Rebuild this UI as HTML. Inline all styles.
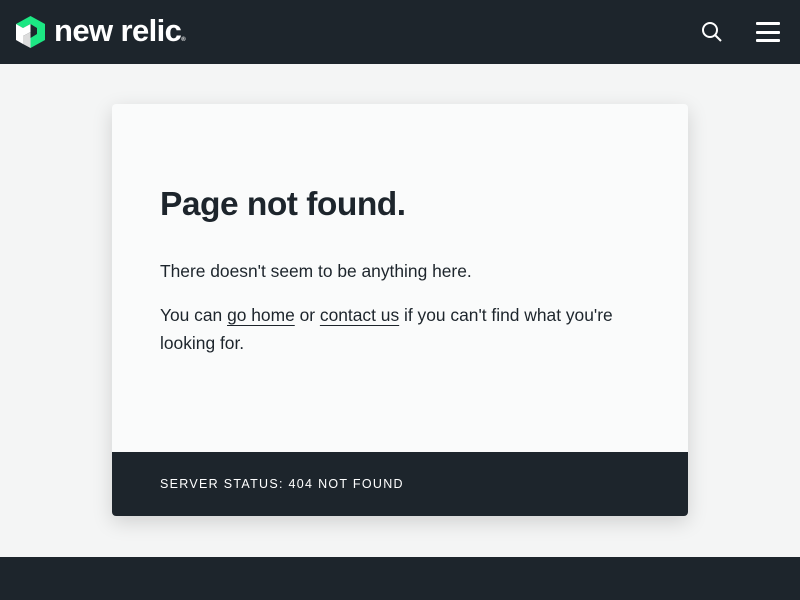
<!DOCTYPE html>
<html><head><meta charset="utf-8"><style>
html,body{margin:0;padding:0;width:800px;height:600px;overflow:hidden;background:#f4f5f5;font-family:"Liberation Sans",sans-serif}
.top{position:absolute;left:0;top:0;width:800px;height:64px;background:#1d252c}
.logo-t{position:absolute;left:54px;top:13px;color:#fff;font-weight:bold;font-size:31px;letter-spacing:-0.6px}
.card{position:absolute;left:112px;top:104px;width:576px;height:412px;background:#fafbfb;border-radius:4px;box-shadow:0 6px 20px rgba(0,0,0,.15);overflow:hidden}
h1{position:absolute;left:48px;top:82px;margin:0;font-size:33.5px;font-weight:bold;color:#1d252c;letter-spacing:-0.5px}
p{position:absolute;left:48px;margin:0;font-size:17.4px;color:#1d252c;line-height:28px;width:490px}
a{color:#1d252c;text-decoration:underline;text-underline-offset:4px}
.foot{position:absolute;left:0;bottom:0;width:576px;height:64px;background:#1d252c;color:#fff;font-size:12.5px;letter-spacing:1.3px}
.bot{position:absolute;left:0;top:557px;width:800px;height:43px;background:#1d252c}
</style></head><body>
<div class="top">
<svg style="position:absolute;left:16px;top:16px" width="29" height="32" viewBox="0 0 29 32">
<polygon points="14.5,0 29,8 29,24 14.5,32 14.5,22 21,18 21,12 14.5,8 7,12 0,8" fill="#1ce783"/>
<polygon points="0,8 7,12 14.5,8 14.5,16 7,20 7,28 0,24" fill="#fff"/>
<polygon points="7,20 14.5,16 14.5,32 7,28" fill="#dcdcdc"/>
</svg>
<div class="logo-t">new relic<span style="font-size:6px">®</span></div>
<svg style="position:absolute;left:701px;top:21px" width="22" height="22" viewBox="0 0 22 22" fill="none" stroke="#fff" stroke-width="2"><circle cx="9" cy="9" r="7"/><line x1="14" y1="14" x2="20" y2="20"/></svg>
<svg style="position:absolute;left:756px;top:21px" width="24" height="22" viewBox="0 0 24 22" fill="#fff"><rect x="0" y="1" width="24" height="3" rx="1"/><rect x="0" y="10" width="24" height="3" rx="1"/><rect x="0" y="18" width="24" height="3" rx="1"/></svg>
</div>
<div class="card">
<h1>Page not found.</h1>
<p style="top:153px">There doesn't seem to be anything here.</p>
<p style="top:197px">You can <a>go home</a> or <a>contact us</a> if you can't find what you're looking for.</p>
<div class="foot"><span style="position:absolute;left:48px;top:25px">SERVER STATUS: 404 NOT FOUND</span></div>
</div>
<div class="bot"></div>
</body></html>
